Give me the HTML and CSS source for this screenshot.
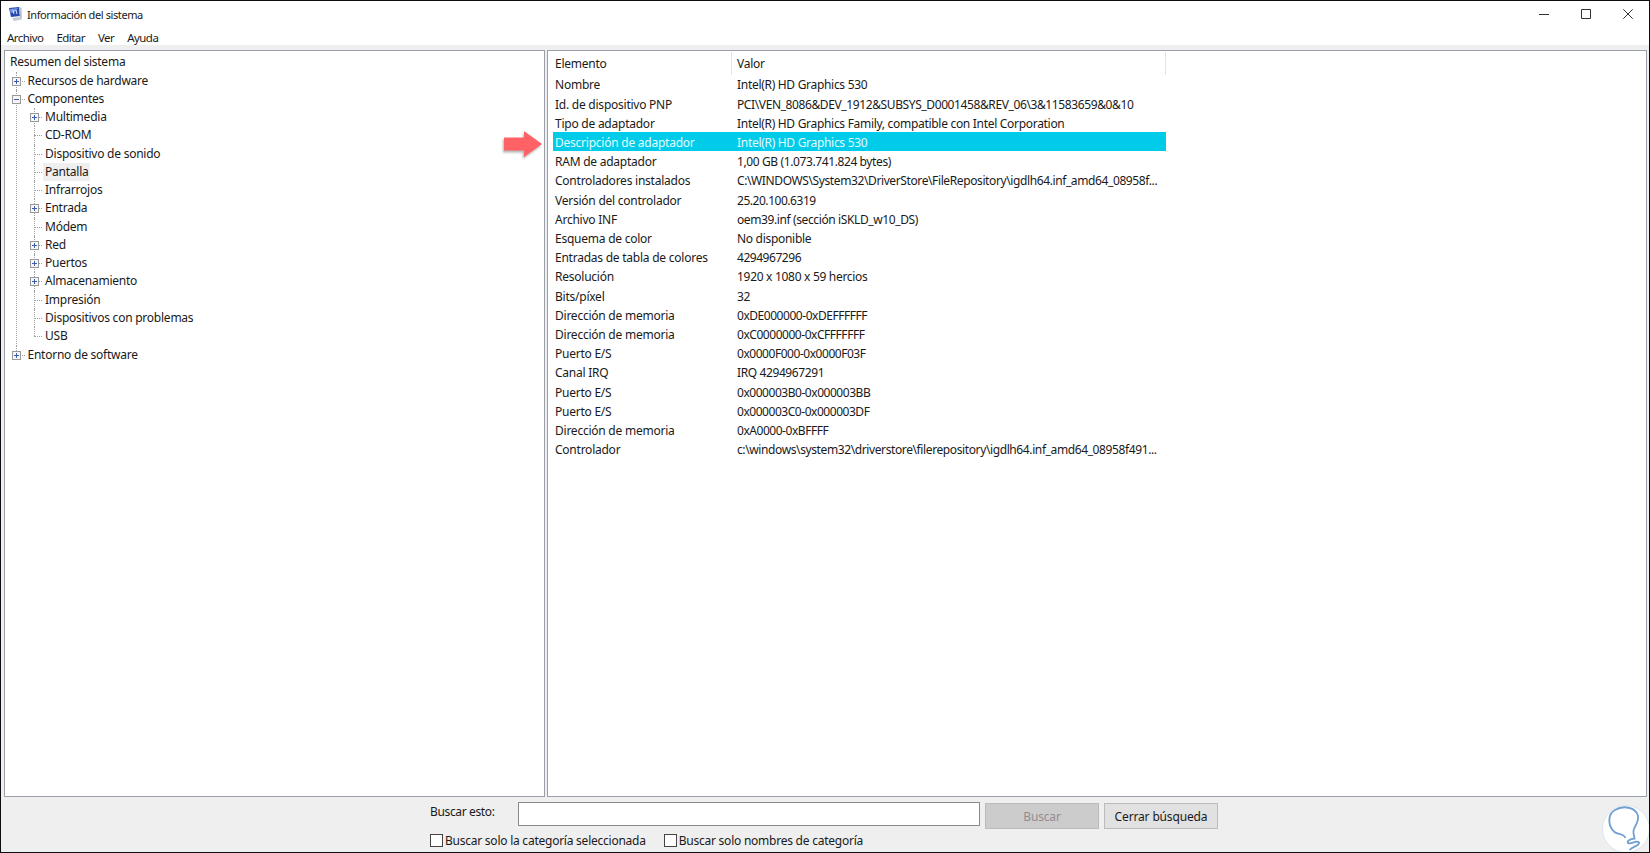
FILE: index.html
```
<!DOCTYPE html>
<html lang="es">
<head>
    <meta charset="UTF-8">
    <title>Información del sistema</title>
    <link rel="stylesheet" href="styles.css">
</head>
<body>
<div class="window">
    <div class="titlebar">
        <svg class="app-icon" width="14" height="15" viewBox="0 0 14 15">
            <path d="M0 1 L10 0 L11 9 L2 10 Z" fill="#2547ae"/>
            <path d="M1 2 L9 1 L6 5 L1.500 6 Z" fill="#7598dd"/>
            <path d="M10 0 L12.500 1 L13 11 L11 12 Z" fill="#b9c2d2"/>
            <path d="M3 11 L11 10 L13 12.500 L5 14 Z" fill="#c5c9d0"/>
            <path d="M4 3 L5 7 M7 3 L8 7" stroke="#dce7fb"/>
        </svg>
        <span class="title">Información del sistema</span>
        <div class="controls">
            <svg width="10" height="10" viewBox="0 0 10 10"><path d="M0 5.5H10"/></svg>
            <svg width="10" height="10" viewBox="0 0 10 10"><path d="M.5 .5H9.5V9.5H.5Z"/></svg>
            <svg width="10" height="10" viewBox="0 0 10 10"><path d="M.3 .3L9.7 9.7M9.7 .3L.3 9.7"/></svg>
        </div>
    </div>
    <div class="menu">
        <span>Archivo</span><span>Editar</span><span>Ver</span><span>Ayuda</span>
    </div>

    <div class="panes">
        <div class="tree">
            <div class="root">Resumen del sistema</div>
            <ul>
                <li><div class="node"><i class="box plus"></i><span>Recursos de hardware</span></div></li>
                <li><div class="node"><i class="box"></i><span>Componentes</span></div>
                    <ul>
                        <li><div class="node"><i class="box plus"></i><span>Multimedia</span></div></li>
                        <li><div class="node"><span>CD-ROM</span></div></li>
                        <li><div class="node"><span>Dispositivo de sonido</span></div></li>
                        <li><div class="node"><span class="current">Pantalla</span></div></li>
                        <li><div class="node"><span>Infrarrojos</span></div></li>
                        <li><div class="node"><i class="box plus"></i><span>Entrada</span></div></li>
                        <li><div class="node"><span>Módem</span></div></li>
                        <li><div class="node"><i class="box plus"></i><span>Red</span></div></li>
                        <li><div class="node"><i class="box plus"></i><span>Puertos</span></div></li>
                        <li><div class="node"><i class="box plus"></i><span>Almacenamiento</span></div></li>
                        <li><div class="node"><span>Impresión</span></div></li>
                        <li><div class="node"><span>Dispositivos con problemas</span></div></li>
                        <li><div class="node"><span>USB</span></div></li>
                    </ul>
                </li>
                <li><div class="node"><i class="box plus"></i><span>Entorno de software</span></div></li>
            </ul>
        </div>
        <div class="list">
            <div class="head"><span>Elemento</span><span>Valor</span></div>
            <div class="row"><span>Nombre</span><span>Intel(R) HD Graphics 530</span></div>
            <div class="row"><span>Id. de dispositivo PNP</span><span class="path">PCI\VEN_8086&amp;DEV_1912&amp;SUBSYS_D0001458&amp;REV_06\3&amp;11583659&amp;0&amp;10</span></div>
            <div class="row"><span>Tipo de adaptador</span><span>Intel(R) HD Graphics Family, compatible con Intel Corporation</span></div>
            <div class="row selected"><span>Descripción de adaptador</span><span>Intel(R) HD Graphics 530</span>
                <svg class="arrow" width="44" height="32" viewBox="0 0 44 32"><path d="M3 9.5H23V3L41 16L23 29V22.500H3Z"/></svg>
            </div>
            <div class="row"><span>RAM de adaptador</span><span class="path">1,00 GB (1.073.741.824 bytes)</span></div>
            <div class="row"><span>Controladores instalados</span><span class="path">C:\WINDOWS\System32\DriverStore\FileRepository\igdlh64.inf_amd64_08958f...</span></div>
            <div class="row"><span>Versión del controlador</span><span class="num">25.20.100.6319</span></div>
            <div class="row"><span>Archivo INF</span><span class="path">oem39.inf (sección iSKLD_w10_DS)</span></div>
            <div class="row"><span>Esquema de color</span><span>No disponible</span></div>
            <div class="row"><span>Entradas de tabla de colores</span><span class="num">4294967296</span></div>
            <div class="row"><span>Resolución</span><span>1920 x 1080 x 59 hercios</span></div>
            <div class="row"><span>Bits/píxel</span><span>32</span></div>
            <div class="row"><span>Dirección de memoria</span><span class="num">0xDE000000-0xDEFFFFFF</span></div>
            <div class="row"><span>Dirección de memoria</span><span class="num">0xC0000000-0xCFFFFFFF</span></div>
            <div class="row"><span>Puerto E/S</span><span class="num">0x0000F000-0x0000F03F</span></div>
            <div class="row"><span>Canal IRQ</span><span class="path">IRQ 4294967291</span></div>
            <div class="row"><span>Puerto E/S</span><span class="num">0x000003B0-0x000003BB</span></div>
            <div class="row"><span>Puerto E/S</span><span class="num">0x000003C0-0x000003DF</span></div>
            <div class="row"><span>Dirección de memoria</span><span class="num">0xA0000-0xBFFFF</span></div>
            <div class="row"><span>Controlador</span><span class="path">c:\windows\system32\driverstore\filerepository\igdlh64.inf_amd64_08958f491...</span></div>
        </div>
    </div>

    <div class="search">
        <div class="search-row">
            <label for="q">Buscar esto:</label>
            <input id="q" class="field" type="text">
            <button class="btn" disabled>Buscar</button>
            <button class="btn">Cerrar búsqueda</button>
        </div>
        <div class="checks">
            <label><input type="checkbox">Buscar solo la categoría seleccionada</label>
            <label><input type="checkbox">Buscar solo nombres de categoría</label>
        </div>
    </div>

    <svg class="badge" width="48" height="48" viewBox="0 0 48 48">
        <circle cx="24" cy="24" r="23.500" fill="#fff" stroke="#dfe5ee" stroke-width="1"/>
        <path d="M23.500 33C21 27.500 16 30 12.500 27C5.500 21 5.500 9 13 5C21 0 34 2 36 11C37 18 32 21 31.500 26C31 29 32.500 31 32.500 33.500C28 34 24.500 36 26 38C28 40 35 34.500 37 37.500C38 41 31 41 27.500 45"/>
    </svg>
</div>
</body>
</html>
```
FILE: styles.css
```
* {
    margin: 0;
    padding: 0;
    box-sizing: border-box;
}
body {
    font: 12px "Noto Sans", "Open Sans", sans-serif;
    letter-spacing: -0.24px;
    color: #1a1a1a;
    overflow: hidden;
}
.window {
    position: relative;
    display: flex;
    flex-direction: column;
    width: 1650px;
    height: 853px;
    border: 1px solid #0c0c10;
    background: #efefef;
    overflow: hidden;
}
.titlebar {
    display: flex;
    align-items: center;
    height: 26px;
    padding: 0 16px 0 8px;
    background: #fff;
}
.title {
    margin-left: 4px;
    font-size: 11px;
    letter-spacing: -0.4px;
}
.controls {
    display: flex;
    gap: 32px;
    margin-left: auto;
}
.controls svg {
    fill: none;
    stroke: #333;
}
.menu {
    display: flex;
    gap: 13px;
    height: 18px;
    padding-left: 6px;
    font-size: 11.5px;
    line-height: 21px;
    letter-spacing: -0.55px;
    background: #fff;
}

/* paneles */
.panes {
    display: flex;
    gap: 2px;
    height: 747px;
    margin: 5px 2px 0 3px;
}
.tree, .list {
    border: 1px solid #9a9fa9;
    background: #fff;
}
.tree {
    width: 541px;
    padding: 2.300px 0 0 5px;
}
.root, .node {
    height: 18.270px;
    line-height: 18.270px;
}
ul {
    list-style: none;
}
li {
    position: relative;
    padding-left: 17.500px;
}
li::before {
    content: "";
    position: absolute;
    left: 6px;
    top: 0;
    height: 100%;
    border-left: 1px dotted #a0a0a0;
}
li:last-child::before {
    height: 9px;
}
.node {
    position: relative;
}
.node::before {
    content: "";
    position: absolute;
    left: -11px;
    top: 9px;
    width: 8px;
    border-top: 1px dotted #a0a0a0;
}
.box {
    position: absolute;
    left: -15.500px;
    top: 5px;
    width: 9px;
    height: 9px;
    border: 1px solid #999;
    background: linear-gradient(#3c5cae, #3c5cae) center / 5px 1px no-repeat #f6f6f6;
}
.plus::after {
    content: "";
    position: absolute;
    left: 3px;
    top: 1px;
    width: 1px;
    height: 5px;
    background: #3c5cae;
}
.current {
    display: inline-block;
    margin-left: -2px;
    padding: 0 2px;
    background: #efefef;
}

.list {
    flex: 1;
    padding: 1px 0 0 5px;
}
.head, .row {
    display: grid;
    grid-template-columns: 179px 434px;
    width: 613px;
    white-space: nowrap;
}
.head {
    height: 22.300px;
    line-height: 23px;
}
.head span {
    border-right: 1px solid #e3e3e3;
}
.row {
    height: 19.210px;
    line-height: 21px;
}
.head span, .row span {
    padding-left: 2px;
}
.head span + span, .row span + span {
    padding-left: 5px;
}
.row span + span {
    letter-spacing: -0.3px;
}
.row span.path {
    letter-spacing: -0.39px;
}
.row span.num {
    letter-spacing: -0.46px;
}
.selected {
    position: relative;
    color: #e4fbff;
    background: #00cbe8;
}
.arrow {
    position: absolute;
    left: -52px;
    top: -4px;
    fill: #ff6264;
    filter: drop-shadow(-1px 2px 1px rgba(0, 0, 0, .3));
}

/* busqueda */
.search {
    padding: 5px 0 0 429px;
}
.search-row {
    display: flex;
    height: 27px;
}
.search-row label {
    width: 88px;
    line-height: 20px;
    letter-spacing: -0.36px;
}
.field {
    width: 462px;
    height: 24px;
    border: 1px solid #8a8a8a;
    background: #fff;
}
.btn {
    width: 114px;
    height: 26px;
    margin: 1px 0 0 5px;
    border: 1px solid #bcbcbc;
    background: #e1e1e1;
    font: inherit;
    letter-spacing: -0.15px;
    color: #1a1a1a;
}
.btn:disabled {
    background: #ccc;
    color: #948c90;
}
.checks {
    display: flex;
    gap: 18px;
    margin-top: 2px;
}
.checks label {
    display: flex;
    align-items: center;
    height: 18px;
}
.checks input {
    appearance: none;
    width: 13px;
    height: 13px;
    margin-right: 2px;
    border: 1px solid #444;
    background: #fff;
}
.badge {
    position: absolute;
    right: -1px;
    bottom: -1px;
    fill: none;
    stroke: #719fd1;
    stroke-width: 1.800;
}
```
